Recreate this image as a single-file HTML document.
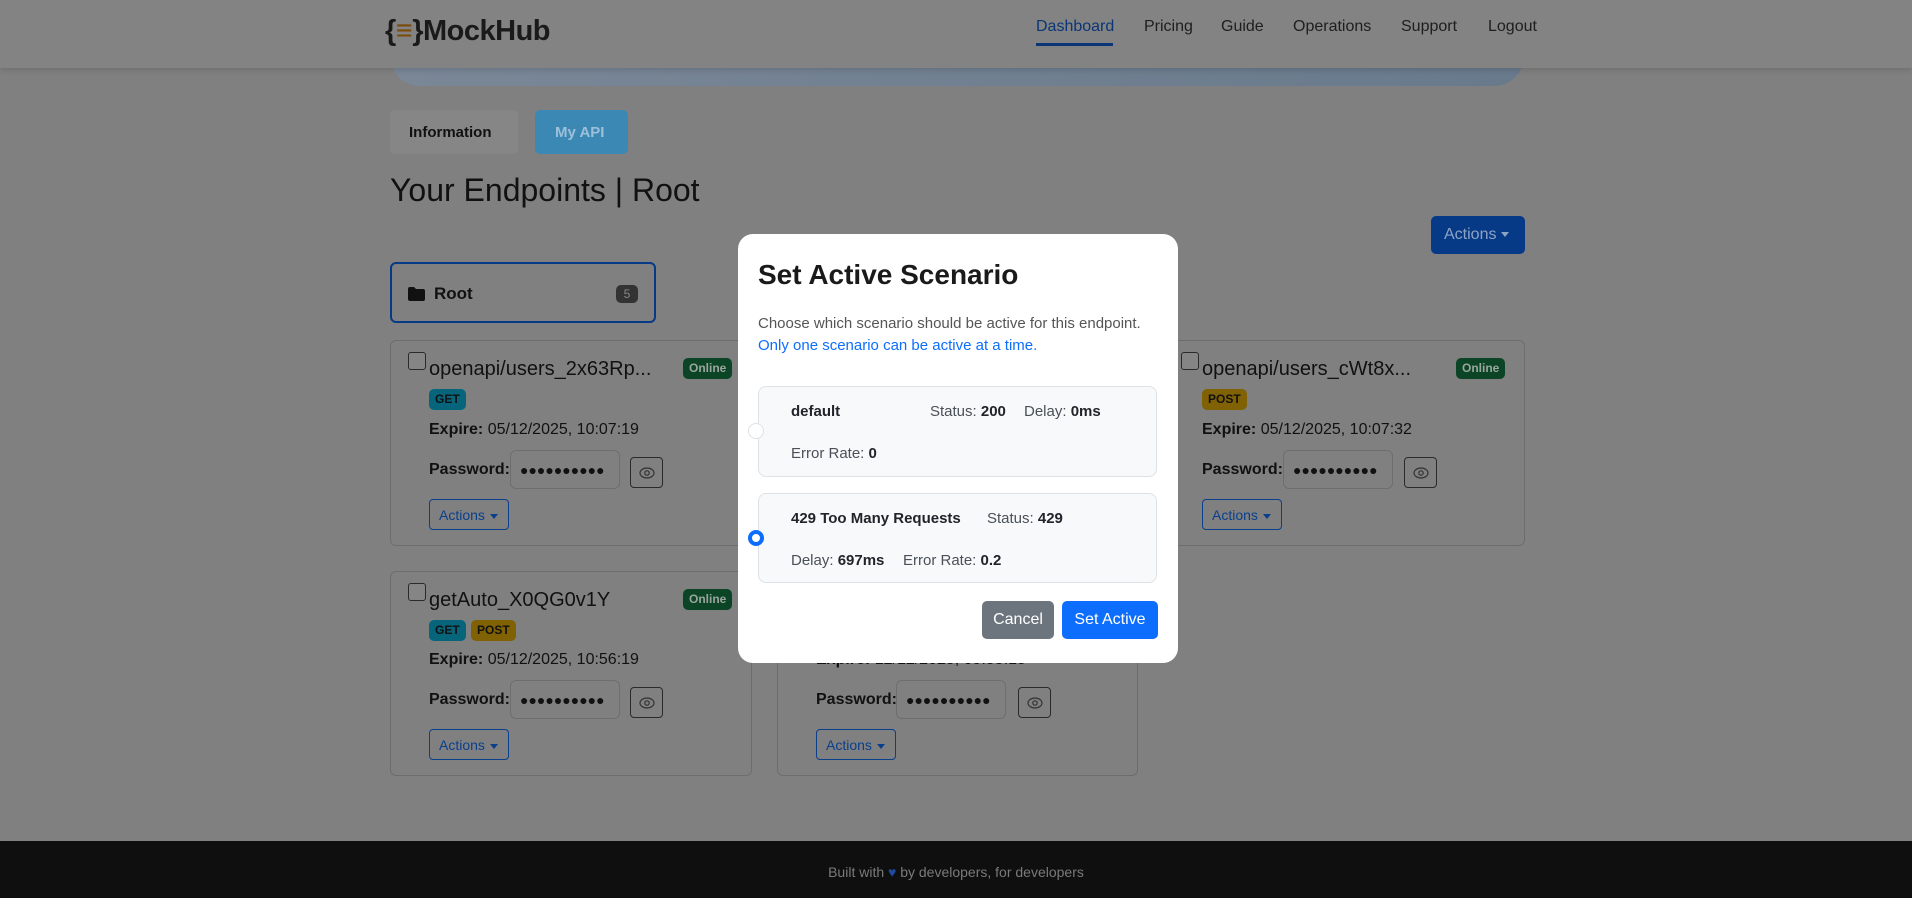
<!DOCTYPE html>
<html><head><meta charset="utf-8">
<style>
*{box-sizing:border-box;margin:0;padding:0}
body{width:1912px;height:898px;overflow:hidden;background:#808080;font-family:"Liberation Sans","DejaVu Sans",sans-serif;color:#111;position:relative;font-size:16px}
.a{position:absolute}
.nav{left:0;top:0;width:1912px;height:68px;background:#838383;box-shadow:0 2px 6px rgba(0,0,0,.15);z-index:2}
.navlink{top:18px;font-size:16px;color:#1e1e1e}
.card{background:#808080;border:1px solid #6d6d6d;border-radius:6px}
.cb{width:18px;height:18px;border:1px solid #2a2a2a;border-radius:3px;background:#858585}
.title{font-size:20px;color:#111;white-space:nowrap}
.online{background:#0c4426;color:#9aa59e;font-size:12px;font-weight:bold;border-radius:5px;padding:3px 6px;line-height:15px}
.get{background:#06657a;color:#111;font-size:12px;font-weight:bold;border-radius:5px;padding:3px 6px;line-height:15px}
.post{background:#806103;color:#111;font-size:12px;font-weight:bold;border-radius:5px;padding:3px 6px;line-height:15px}
.lbl{font-size:16px;color:#111}
.pw{width:110px;height:39px;border:1px solid #6e6e6e;border-radius:6px;font-size:14px;letter-spacing:0;padding:11px 0 0 9px;color:#111;overflow:hidden;white-space:nowrap}
.eye{width:33px;height:31px;border:1px solid #2a2a2a;border-radius:4px}
.act{width:80px;height:31px;border:1px solid #0a3f8c;border-radius:4px;color:#0a3f8c;font-size:14px;padding:7px 0 0 9px}
.caret{display:inline-block;border-left:4px solid transparent;border-right:4px solid transparent;border-top:5px solid currentColor;margin-left:5px;vertical-align:middle}
.modal{left:738px;top:234px;width:440px;height:429px;background:#fff;border-radius:15px;z-index:5}
.box{left:20px;width:399px;background:#f8f9fa;border:1px solid #dee2e6;border-radius:8px}
.m{color:#495057;font-size:15px}
.m b{color:#212529}
</style></head><body>
<div class="a nav">
  <div class="a" style="left:385px;top:15px;font-size:29px;font-weight:bold;color:#1a1a1a;letter-spacing:-0.5px">{<span style="color:#7a4a08">&#8801;</span>}MockHub</div>
  <div class="a navlink" style="left:1036px;color:#0a3677">Dashboard</div>
  <div class="a" style="left:1036px;top:43px;width:77px;height:3px;background:#0a3677"></div>
  <div class="a navlink" style="left:1144px">Pricing</div>
  <div class="a navlink" style="left:1221px">Guide</div>
  <div class="a navlink" style="left:1293px">Operations</div>
  <div class="a navlink" style="left:1401px">Support</div>
  <div class="a navlink" style="left:1488px">Logout</div>
</div>
<div class="a" style="left:390px;top:50px;width:1134px;height:36px;background:linear-gradient(90deg,#7a8797,#687a8c);border-radius:0 0 30px 30px"></div>
<div class="a" style="left:390px;top:110px;width:128px;height:44px;background:#868686;border-radius:5px;font-size:15px;font-weight:bold;padding:14px 0 0 19px">Information</div>
<div class="a" style="left:535px;top:110px;width:93px;height:44px;background:#3c88b5;border-radius:5px;font-size:15px;font-weight:bold;color:#9cc0d8;padding:14px 0 0 20px">My API</div>
<div class="a" style="left:390px;top:172px;font-size:32px;color:#111">Your Endpoints | Root</div>
<div class="a" style="left:1431px;top:216px;width:94px;height:38px;background:#063a86;border-radius:5px;color:#8da3c4;font-size:16px;padding:10px 0 0 13px">Actions<span class="caret"></span></div>
<div class="a" style="left:390px;top:262px;width:266px;height:61px;border:2px solid #063a86;border-radius:6px">
  <svg class="a" style="left:16px;top:23px" width="17" height="14" viewBox="0 0 17 14"><path d="M0 2 Q0 0 2 0 H6 L8 2 H15 Q17 2 17 4 V12 Q17 14 15 14 H2 Q0 14 0 12Z" fill="#111"/></svg>
  <div class="a" style="left:42px;top:20px;font-size:17px;font-weight:bold">Root</div>
  <div class="a" style="left:224px;top:21px;width:22px;height:18px;background:#333;border-radius:5px;color:#888;font-size:12px;text-align:center;line-height:18px">5</div>
</div>

<div class="a card" style="left:390px;top:340px;width:362px;height:206px"></div>
<div class="a card" style="left:777px;top:340px;width:361px;height:206px"></div>
<div class="a card" style="left:1163px;top:340px;width:362px;height:206px"></div>
<div class="a card" style="left:390px;top:571px;width:362px;height:205px"></div>
<div class="a card" style="left:777px;top:571px;width:361px;height:205px"></div>

<div class="a cb" style="left:408px;top:352px"></div>
<div class="a title" style="left:429px;top:358px">openapi/users_2x63Rp...</div>
<div class="a online" style="left:683px;top:358px">Online</div>
<div class="a get" style="left:429px;top:389px">GET</div>
<div class="a lbl" style="left:429px;top:421px"><b>Expire:</b> 05/12/2025, 10:07:19</div>
<div class="a lbl" style="left:429px;top:461px"><b>Password:</b></div>
<div class="a pw" style="left:510px;top:450px">●●●●●●●●●●</div>
<div class="a eye" style="left:630px;top:457px"><svg class="a" style="left:8px;top:9px" width="16" height="12" viewBox="0 0 16 12"><ellipse cx="8" cy="6" rx="7" ry="5" fill="none" stroke="#333" stroke-width="1.2"/><circle cx="8" cy="6" r="2.2" fill="none" stroke="#333" stroke-width="1.2"/></svg></div>
<div class="a act" style="left:429px;top:499px">Actions<span class="caret"></span></div>

<div class="a cb" style="left:1181px;top:352px"></div>
<div class="a title" style="left:1202px;top:358px">openapi/users_cWt8x...</div>
<div class="a online" style="left:1456px;top:358px">Online</div>
<div class="a post" style="left:1202px;top:389px">POST</div>
<div class="a lbl" style="left:1202px;top:421px"><b>Expire:</b> 05/12/2025, 10:07:32</div>
<div class="a lbl" style="left:1202px;top:461px"><b>Password:</b></div>
<div class="a pw" style="left:1283px;top:450px">●●●●●●●●●●</div>
<div class="a eye" style="left:1404px;top:457px"><svg class="a" style="left:8px;top:9px" width="16" height="12" viewBox="0 0 16 12"><ellipse cx="8" cy="6" rx="7" ry="5" fill="none" stroke="#333" stroke-width="1.2"/><circle cx="8" cy="6" r="2.2" fill="none" stroke="#333" stroke-width="1.2"/></svg></div>
<div class="a act" style="left:1202px;top:499px">Actions<span class="caret"></span></div>

<div class="a cb" style="left:408px;top:583px"></div>
<div class="a title" style="left:429px;top:589px">getAuto_X0QG0v1Y</div>
<div class="a online" style="left:683px;top:589px">Online</div>
<div class="a get" style="left:429px;top:620px">GET</div>
<div class="a post" style="left:471px;top:620px">POST</div>
<div class="a lbl" style="left:429px;top:651px"><b>Expire:</b> 05/12/2025, 10:56:19</div>
<div class="a lbl" style="left:429px;top:691px"><b>Password:</b></div>
<div class="a pw" style="left:510px;top:680px">●●●●●●●●●●</div>
<div class="a eye" style="left:630px;top:687px"><svg class="a" style="left:8px;top:9px" width="16" height="12" viewBox="0 0 16 12"><ellipse cx="8" cy="6" rx="7" ry="5" fill="none" stroke="#333" stroke-width="1.2"/><circle cx="8" cy="6" r="2.2" fill="none" stroke="#333" stroke-width="1.2"/></svg></div>
<div class="a act" style="left:429px;top:729px">Actions<span class="caret"></span></div>

<div class="a lbl" style="left:816px;top:651px"><b>Expire:</b> 12/12/2025, 09:55:15</div>
<div class="a lbl" style="left:816px;top:691px"><b>Password:</b></div>
<div class="a pw" style="left:896px;top:680px">●●●●●●●●●●</div>
<div class="a eye" style="left:1018px;top:687px"><svg class="a" style="left:8px;top:9px" width="16" height="12" viewBox="0 0 16 12"><ellipse cx="8" cy="6" rx="7" ry="5" fill="none" stroke="#333" stroke-width="1.2"/><circle cx="8" cy="6" r="2.2" fill="none" stroke="#333" stroke-width="1.2"/></svg></div>
<div class="a act" style="left:816px;top:729px">Actions<span class="caret"></span></div>

<div class="a" style="left:0;top:841px;width:1912px;height:57px;background:#0f0f0f;text-align:center;color:#7a7a7a;font-size:14px;padding-top:23px">Built with <span style="color:#1f4aa0">&#9829;</span> by developers, for developers</div>

<div class="a modal">
  <div class="a" style="left:20px;top:25px;font-size:28px;font-weight:bold;color:#1a1a1a">Set Active Scenario</div>
  <div class="a" style="left:20px;top:79px;font-size:15px;color:#555;line-height:22px;white-space:nowrap">Choose which scenario should be active for this endpoint.<br><span style="color:#0d6efd">Only one scenario can be active at a time.</span></div>
  <div class="a box" style="top:152px;height:91px">
    <div class="a m" style="left:32px;top:16px"><b>default</b></div>
    <div class="a m" style="left:171px;top:16px">Status: <b>200</b></div>
    <div class="a m" style="left:265px;top:16px">Delay: <b>0ms</b></div>
    <div class="a m" style="left:32px;top:58px">Error Rate: <b>0</b></div>
  </div>
  <div class="a box" style="top:259px;height:90px">
    <div class="a m" style="left:32px;top:16px"><b>429 Too Many Requests</b></div>
    <div class="a m" style="left:228px;top:16px">Status: <b>429</b></div>
    <div class="a m" style="left:32px;top:58px">Delay: <b>697ms</b></div>
    <div class="a m" style="left:144px;top:58px">Error Rate: <b>0.2</b></div>
  </div>
  <div class="a" style="left:10px;top:189px;width:16px;height:16px;border-radius:50%;background:#fff;border:1px solid #dee2e6"></div>
  <div class="a" style="left:10px;top:296px;width:16px;height:16px;border-radius:50%;background:#fff;border:4px solid #0d6efd"></div>
  <div class="a" style="left:244px;top:367px;width:72px;height:38px;background:#6c757d;border-radius:5px;color:#fff;font-size:16px;text-align:center;line-height:38px">Cancel</div>
  <div class="a" style="left:324px;top:367px;width:96px;height:38px;background:#0d6efd;border-radius:5px;color:#fff;font-size:16px;text-align:center;line-height:38px">Set Active</div>
</div>
</body></html>
